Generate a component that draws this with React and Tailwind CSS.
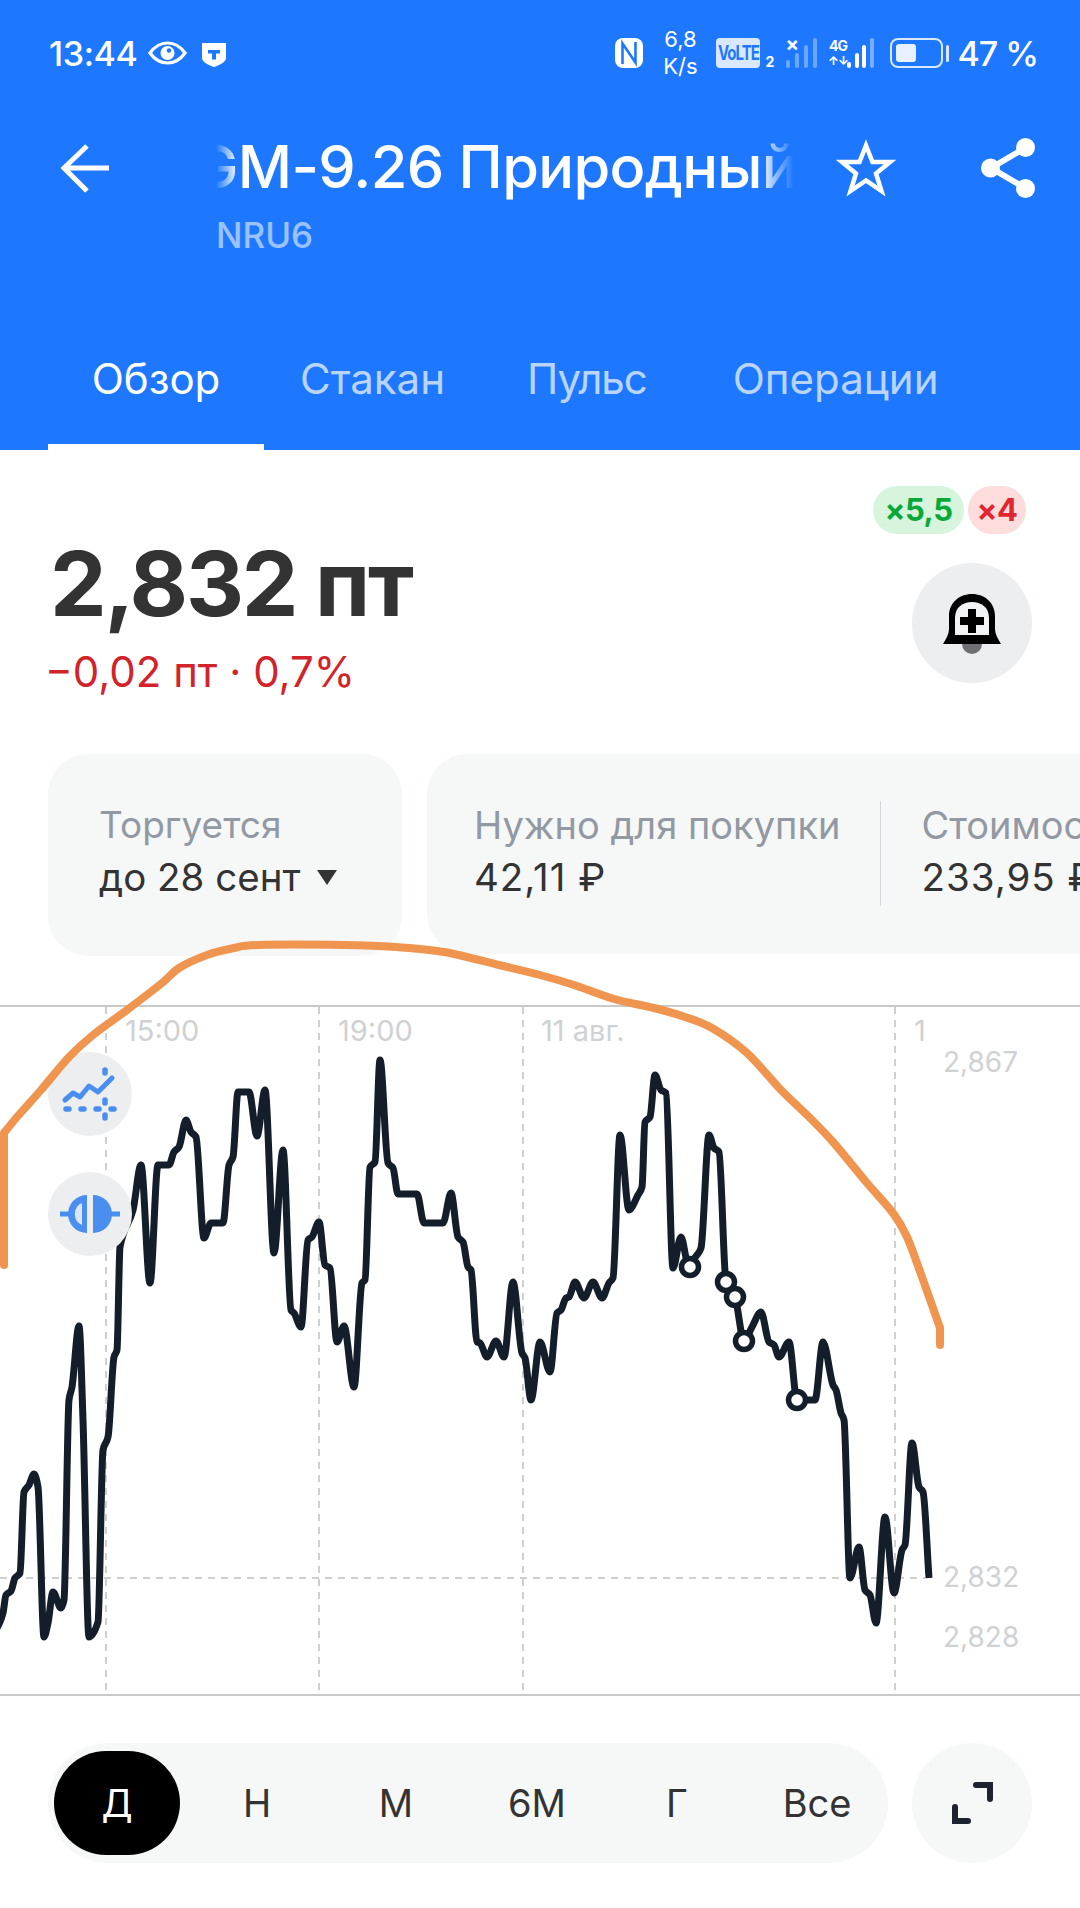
const font = { fontFamily: 'Inter, "Noto Sans", sans-serif' };

// price line, sampled by hand off the screenshot (page coordinates minus chart top)
const CHART_TOP = 1005;
const price = [
  [-4,1630],[0,1622],[3,1613],[6,1595],[11,1591],[15,1578],[20,1573],[24,1492],[29,1485],[34,1474],[38,1487],[44,1637],[48,1623],[53,1592],[61,1608],[64,1600],[69,1400],[72,1387],[79,1326],[83,1420],[89,1637],[98,1622],[103,1450],[108,1437],[114,1357],[117,1350],[120,1247],[133,1210],[141,1165],[150,1283],[158,1165],[169,1165],[174,1152],[179,1147],[186,1120],[191,1132],[196,1137],[204,1238],[211,1223],[223,1223],[229,1165],[233,1157],[238,1092],[249,1092],[257,1136],[265,1090],[274,1253],[283,1150],[291,1310],[294,1313],[301,1327],[308,1240],[312,1237],[319,1222],[325,1265],[330,1268],[337,1342],[344,1326],[354,1387],[362,1283],[365,1280],[370,1167],[375,1162],[380,1060],[388,1163],[393,1168],[398,1194],[417,1194],[424,1223],[443,1223],[451,1193],[458,1237],[463,1242],[468,1267],[471,1270],[477,1342],[480,1343],[487,1357],[496,1341],[504,1357],[513,1282],[522,1353],[525,1358],[531,1400],[540,1342],[550,1372],[557,1313],[561,1310],[566,1298],[569,1297],[575,1282],[584,1298],[593,1282],[602,1298],[609,1283],[613,1278],[620,1135],[629,1210],[638,1195],[642,1187],[645,1122],[650,1117],[655,1075],[661,1090],[666,1093],[673,1268],[681,1237],[688,1263],[697,1255],[701,1248],[709,1135],[714,1148],[719,1152],[726,1282],[735,1297],[744,1341],[752,1327],[761,1312],[769,1342],[774,1345],[779,1357],[789,1342],[797,1400],[815,1400],[823,1342],[833,1385],[836,1390],[841,1413],[844,1420],[850,1578],[859,1547],[865,1590],[870,1595],[876,1623],[885,1517],[894,1593],[902,1550],[905,1545],[912,1443],[919,1487],[923,1492],[929,1578],
];
const scribble = [
  [4,1133],[17,1117],[41,1090],[69,1057],[93,1035],[127,1010],[162,983],[179,968],[207,955],[234,948],[258,945],[344,945],[396,947],[444,952],[499,965],[540,975],[574,985],[614,999],[654,1008],[685,1017],[712,1028],[747,1053],[781,1090],[809,1117],[833,1142],[867,1183],[893,1213],[907,1237],[922,1277],[940,1328],
];
const markers = [[690,1267],[726,1282],[735,1297],[744,1341],[797,1400]];

// hand-drawn stroke
function smooth(points, k = 0.16) {
  const p = points.map(([x, y]) => [x, y - CHART_TOP]);
  let d = `M${p[0][0]} ${p[0][1]}`;
  for (let i = 0; i < p.length - 1; i++) {
    const a = p[i - 1] || p[i];
    const b = p[i];
    const c = p[i + 1];
    const e = p[i + 2] || c;
    d += ` C${b[0] + (c[0] - a[0]) * k} ${b[1] + (c[1] - a[1]) * k} ${c[0] - (e[0] - b[0]) * k} ${c[1] - (e[1] - b[1]) * k} ${c[0]} ${c[1]}`;
  }
  return d;
}

// monotone cubic, keeps peaks round and flat parts flat like the chart does
function monotone(points) {
  const p = points.map(([x, y]) => [x, y - CHART_TOP]);
  const s = p.slice(0, -1).map((q, i) => (p[i + 1][1] - q[1]) / (p[i + 1][0] - q[0]));
  const m = p.map((_, i) => {
    if (i === 0) return s[0];
    if (i === p.length - 1) return s[i - 1];
    if (s[i - 1] * s[i] <= 0) return 0;
    return (2 * s[i - 1] * s[i]) / (s[i - 1] + s[i]);
  });
  let d = `M${p[0][0]} ${p[0][1]}`;
  for (let i = 0; i < p.length - 1; i++) {
    const h = (p[i + 1][0] - p[i][0]) / 3;
    d += ` C${p[i][0] + h} ${p[i][1] + m[i] * h} ${p[i + 1][0] - h} ${p[i + 1][1] - m[i + 1] * h} ${p[i + 1][0]} ${p[i + 1][1]}`;
  }
  return d;
}

function Bars({ heights, className, gap }) {
  return (
    <div className={`flex items-end ${gap}`}>
      {heights.map((h, i) => (
        <span key={i} style={{ height: h }} className={`w-[4px] rounded-[2px] ${className[i]}`} />
      ))}
    </div>
  );
}

function StatusBar() {
  return (
    <div className="flex h-[106px] items-center justify-between pr-[42px] pl-[49px] text-white">
      <div className="flex items-center">
        <span className="text-[34px] font-medium tracking-[-0.4px]">13:44</span>
        <svg className="ml-[11px]" width="39" height="24" viewBox="0 0 39 24" fill="none">
          <path d="M2 12C7 5 13 2 19.5 2S32 5 37 12c-5 7-11 10-17.5 10S7 19 2 12Z" stroke="white" strokeWidth="3.2" />
          <circle cx="19.5" cy="12" r="7" fill="white" />
          <circle cx="21" cy="9.5" r="2.2" fill="#1e78ff" />
        </svg>
        <svg className="mt-[4px] ml-[14px]" width="26" height="26" viewBox="0 0 26 26">
          <path d="M1 1h24v15c0 4-6 7-12 9C7 23 1 20 1 16Z" fill="white" />
          <path d="M7 8h12v3.4h-4v6h-4v-6H7Z" fill="#1e78ff" />
        </svg>
      </div>
      <div className="flex items-center">
        <svg width="28" height="30" viewBox="0 0 28 30">
          <rect width="28" height="30" rx="8" fill="white" />
          <path d="M7.5 26V5.500L20.500 24.500V4" fill="none" stroke="#1e78ff" strokeWidth="2.600" />
        </svg>
        <div className="ml-[19px] flex w-[36px] flex-col items-center text-[22px] leading-[27px] font-normal">
          <span>6,8</span>
          <span>K/s</span>
        </div>
        <div className="ml-[18px] flex h-[30px] w-[44px] items-center justify-center rounded-[4px] bg-[#d9e8ff] text-[15px] font-bold tracking-[-1px] text-[#1e78ff]">
          <span className="inline-block scale-y-135">VoLTE</span>
        </div>
        <span className="mt-[17px] ml-[5px] w-[8px] text-[14px] leading-[14px] font-bold">2</span>
        <div className="relative ml-[13px] h-[30px] w-[32px]">
          <span className="absolute top-[-4px] left-[-1px] text-[20px] leading-[20px] font-bold">×</span>
          <div className="absolute bottom-0 left-0">
            <Bars heights={[8, 15, 23, 30]} gap="gap-[5px]" className={['bg-white/35', 'bg-white/35', 'bg-white/35', 'bg-white/35']} />
          </div>
        </div>
        <div className="ml-[10px] flex h-[30px] w-[49px] items-end">
          <div className="flex w-[19px] flex-col items-center text-[14px] leading-[15px] font-bold tracking-[-1px]">
            <span>4G</span>
            <span className="text-[12px]">↑↓</span>
          </div>
          <Bars heights={[6, 15, 23, 30]} gap="gap-[3.500px]" className={['bg-white', 'bg-white', 'bg-white', 'bg-white/40']} />
        </div>
        <div className="ml-[13px] flex h-[30px] w-[53px] items-center rounded-[8px] border-[2.5px] border-[#d9e8ff] p-[4px]">
          <span className="h-full w-[20px] rounded-[3px] bg-[#e8f1ff]" />
        </div>
        <span className="ml-[3px] h-[17px] w-[3px] rounded-[2px] bg-[#d9e8ff]" />
        <span className="ml-[8px] text-[34px] font-medium tracking-[-1px]">47 %</span>
      </div>
    </div>
  );
}

function Header() {
  return (
    <div className="bg-[#1e78ff]">
      <StatusBar />
      <div className="flex h-[221px] items-start">
        <svg className="mt-[37px] ml-[60px] shrink-0" width="50" height="50" viewBox="0 0 50 50" fill="none" stroke="white" strokeWidth="5">
          <path d="M49 25H6M27 3 4 25l23 23" />
        </svg>
        <div className="ml-[106px] w-[577px] shrink-0">
          <div className="relative h-[100px] w-[577px] overflow-hidden">
            <span className="absolute top-[25px] left-[-22px] whitespace-nowrap text-[59.500px] leading-[70px] font-medium tracking-[-0.7px] text-white">GM-9.26 Природный</span>
            <span className="absolute top-0 left-0 h-full w-[22px] bg-gradient-to-r from-[#1e78ff] to-[#1e78ff]/0" />
            <span className="absolute top-0 right-0 h-full w-[34px] bg-gradient-to-l from-[#1e78ff] to-[#1e78ff]/0" />
          </div>
          <div className="mt-[9px] text-[35px] leading-[40px] font-medium text-white/55">NRU6</div>
        </div>
        <svg className="mt-[33px] ml-[43px] shrink-0" width="60" height="58" viewBox="0 0 60 58" fill="none">
          <path d="M30 6.500 36.500 23H54L40 34.500 45.500 52 30 41.500 14.500 52 20 34.500 6 23H23.500Z" stroke="white" strokeWidth="4.500" />
        </svg>
        <svg className="mt-[32px] ml-[85px] shrink-0" width="54" height="60" viewBox="0 0 54 60" fill="none">
          <path d="M44 10 10 30l34 20" stroke="white" strokeWidth="6" />
          <circle cx="44.500" cy="9.500" r="9.500" fill="white" />
          <circle cx="9.500" cy="30" r="9.500" fill="white" />
          <circle cx="44.500" cy="50.500" r="9.500" fill="white" />
        </svg>
      </div>
      <div className="flex h-[123px] pt-[26px] pl-[48px] text-[42px] leading-[52px] font-normal">
        <div className="relative h-[97px] w-[216px] text-center text-white">
          Обзор
          <span className="absolute right-0 bottom-0 left-0 h-[6px] bg-white" />
        </div>
        <span className="ml-[36px] text-white/70">Стакан</span>
        <span className="ml-[82px] tracking-[-1px] text-white/70">Пульс</span>
        <span className="ml-[86px] text-white/70">Операции</span>
      </div>
    </div>
  );
}

function Quote() {
  return (
    <div className="relative h-[304px]">
      <div className="absolute top-[36px] right-[54px] flex gap-[4px] text-center text-[31px] leading-[48px] font-bold tracking-[-0.5px]">
        <span className="w-[91px] rounded-full bg-[#d7f5dd] text-[#0aa838]">×5,5</span>
        <span className="w-[58px] rounded-full bg-[#fddcdc] text-[#e0262e]">×4</span>
      </div>
      <div className="pt-[84px] pl-[50px] text-[#333333]">
        <div className="text-[90px] leading-[100px] font-bold tracking-[-2.300px]">2,832 пт</div>
        <div className="mt-[13px] ml-[-5px] text-[42px] leading-[50px] font-normal text-[#d2232a]">−0,02 пт · 0,7%</div>
      </div>
      <div className="absolute top-[113px] right-[48px] flex h-[120px] w-[120px] items-center justify-center rounded-full bg-[#eceef0]">
        <svg width="60" height="62" viewBox="0 0 60 62">
          <path d="M20 52a10 10 0 0 0 20 0Z" fill="#6e7074" />
          <path d="M30 2C17 2 7 11 7 24V37C7 42 4 47 1 52H59C56 47 53 42 53 37V24C53 11 43 2 30 2Z" fill="#000" />
          <path d="M30 10C21 10 13 15 13 26V43H47V26C47 15 39 10 30 10Z" fill="#f2f3f4" />
          <path d="M26 17h8v8h8v8h-8v8h-8v-8h-8v-8h8Z" fill="#000" />
        </svg>
      </div>
    </div>
  );
}

function InfoCards() {
  return (
    <div className="flex gap-[25px] overflow-hidden pl-[48px]">
      <div className="h-[202px] w-[354px] shrink-0 rounded-[40px] bg-[#f6f8f8] pt-[45px] pl-[51px] leading-[52px]">
        <div className="text-[37px] text-[#9299a2]">Торгуется</div>
        <div className="flex items-center text-[38.500px] text-[#333333]">
          до 28 сент
          <svg className="ml-[17px]" width="20" height="17" viewBox="0 0 20 17"><path d="M0 1h20L10 16Z" fill="#333" /></svg>
        </div>
      </div>
      <div className="flex h-[200px] w-[800px] shrink-0 rounded-[40px] bg-[#f6f8f8] pl-[47px] leading-[52px]">
        <div className="pt-[45px]">
          <div className="whitespace-nowrap text-[38px] text-[#9299a2]">Нужно для покупки</div>
          <div className="text-[38.500px] tracking-[1px] text-[#333333]">42,11 ₽</div>
        </div>
        <span className="mt-[47px] ml-[40px] h-[105px] w-[1px] bg-[#d5d8db]" />
        <div className="ml-[40px] pt-[45px]">
          <div className="whitespace-nowrap text-[38px] text-[#9299a2]">Стоимость</div>
          <div className="text-[38.500px] tracking-[1px] text-[#333333]">233,95 ₽</div>
        </div>
      </div>
    </div>
  );
}

function Chart() {
  return (
    <div className="relative h-[691px] border-t-[2px] border-b-[2px] border-[#c9c9c9]">
      <svg className="absolute top-[-2px] left-0" width="1080" height="691" fill="none">
        <g stroke="#cfcfcf" strokeWidth="2" strokeDasharray="7 6">
          <path d="M106 2V690M319 2V690M523 2V690M895 2V690M0 573H925" />
        </g>
      </svg>
      {[['15:00', 125], ['19:00', 338], ['11 авг.', 541], ['1', 914]].map(([t, x]) => (
        <span key={t} style={{ left: x }} className="absolute top-[6px] text-[29px] leading-[36px] text-[#cfd1d3]">{t}</span>
      ))}
      <span className="absolute top-[37px] left-[943px] text-[28px] leading-[36px] text-[#cfd1d3]">2,867</span>
      <span className="absolute top-[552px] left-[943px] text-[28px] leading-[36px] text-[#cfd1d3]">2,832</span>
      <span className="absolute top-[612px] left-[943px] text-[28px] leading-[36px] text-[#cfd1d3]">2,828</span>
      <svg className="absolute top-[-2px] left-0" width="1080" height="691" fill="none">
        <path d={monotone(price)} stroke="#141e2b" strokeWidth="7" strokeLinejoin="round" />
        {markers.map(([x, y]) => (
          <circle key={x} cx={x} cy={y - CHART_TOP} r="8.500" fill="white" stroke="#141e2b" strokeWidth="5.500" />
        ))}
      </svg>
      <div className="absolute top-[45px] left-[48px] h-[84px] w-[84px] rounded-full bg-[#eceef0]">
        <svg width="84" height="84" viewBox="0 0 84 84" fill="none" stroke="#4a8ef0" strokeLinecap="round">
          <path d="M17 48l8-7 7 4 9-11 9 6 14-14" strokeWidth="5" strokeLinejoin="round" />
          <path d="M18 57h3M33 57h3M48 57h3M63 57h3" strokeWidth="5.500" />
          <path d="M57 18v3M57 48v3M57 63v3" strokeWidth="5.500" />
        </svg>
      </div>
      <div className="absolute top-[165px] left-[48px] h-[84px] w-[84px] rounded-full bg-[#eceef0]">
        <svg width="84" height="84" viewBox="0 0 84 84">
          <path d="M12 42H26M58 42H72" stroke="#4a8ef0" strokeWidth="5" />
          <path d="M39 23A19 19 0 0 0 39 61Z" fill="#4a8ef0" />
          <path d="M34 31A12 12 0 0 0 34 53Z" fill="#dbe7f8" />
          <path d="M45 23A19 19 0 0 1 45 61Z" fill="#4a8ef0" />
        </svg>
      </div>
      <svg className="pointer-events-none absolute top-[-2px] left-0 overflow-visible" width="1080" height="691" fill="none">
        <path d="M4 128V260" stroke="#f09550" strokeWidth="8" strokeLinecap="round" />
        <path d={smooth(scribble)} stroke="#f09550" strokeWidth="8" strokeLinejoin="round" />
        <path d="M940 323V340" stroke="#f09550" strokeWidth="8" strokeLinecap="round" />
      </svg>
    </div>
  );
}

function RangeBar() {
  const ranges = [['Н', 257], ['М', 396], ['6М', 537], ['Г', 677], ['Все', 817]];
  return (
    <div className="flex gap-[24px] pt-[47px] pl-[48px]">
      <div className="relative flex h-[120px] w-[840px] items-center rounded-full bg-[#f6f8f8] pl-[6px]">
        <span className="flex h-[104px] w-[126px] items-center justify-center rounded-full bg-black text-[38px] text-white">Д</span>
        {ranges.map(([t, x]) => (
          <span key={t} style={{ left: x - 48, transform: 'translateX(-50%)' }} className="absolute text-[38px] text-[#333333]">{t}</span>
        ))}
      </div>
      <div className="flex h-[120px] w-[120px] items-center justify-center rounded-full bg-[#f6f8f8]">
        <svg width="44" height="44" viewBox="0 0 44 44" fill="none" stroke="#1c2230" strokeWidth="6" strokeLinecap="round">
          <path d="M26 4h14v14M5 26v14h13" />
        </svg>
      </div>
    </div>
  );
}

export default function App() {
  return (
    <div style={font} className="h-[1908px] w-[1080px] overflow-hidden bg-white">
      <Header />
      <Quote />
      <InfoCards />
      <div className="h-[49px]" />
      <Chart />
      <RangeBar />
    </div>
  );
}
